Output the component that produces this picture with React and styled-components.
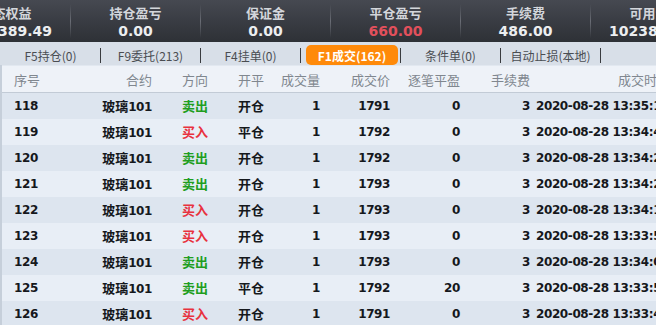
import React from 'react';
import styled, { createGlobalStyle } from 'styled-components';

const GlobalStyle = createGlobalStyle`
  html, body {
    margin: 0;
    padding: 0;
    width: 656px;
    height: 325px;
    overflow: hidden;
    background: #e6ecf4;
  }
`;

const CN = `"Noto Sans CJK SC", "Noto Sans", sans-serif`;
const NUM = `"DejaVu Sans", "Noto Sans CJK SC", sans-serif`;

const Page = styled.div`
  width: 656px;
  height: 325px;
  overflow: hidden;
  display: flex;
  flex-direction: column;
`;

const StatBar = styled.div`
  height: 42px;
  flex: none;
  background: linear-gradient(180deg, #464951 0%, #383b42 55%, #2e3136 100%);
  display: flex;
  align-items: stretch;
  margin-left: -59px;
`;

const Stat = styled.div`
  width: 129px;
  flex: none;
  display: flex;
  flex-direction: column;
  align-items: center;
  padding-top: 4px;
  white-space: nowrap;
`;

const StatLabel = styled.div`
  font-family: ${CN};
  font-weight: 700;
  font-size: 13px;
  line-height: 17px;
  color: #d3d6db;
`;

const StatValue = styled.div`
  font-family: ${NUM};
  font-weight: 700;
  font-size: 14px;
  line-height: 20px;
  color: ${p => (p.$red ? '#e2505c' : '#eceef0')};
`;

const StatSep = styled.div`
  width: 1px;
  flex: none;
  align-self: center;
  height: 34px;
  background: linear-gradient(180deg, rgba(120,124,132,0) 0%, #6a6d75 50%, rgba(120,124,132,0) 100%);
`;

const TabBar = styled.div`
  height: 23px;
  flex: none;
  background: #d8dfe8;
  display: flex;
  align-items: flex-end;
  padding-left: 1px;
`;

const Tab = styled.div`
  flex: none;
  height: 20px;
  display: flex;
  align-items: center;
  justify-content: center;
  font-family: ${CN};
  font-size: 12px;
  white-space: nowrap;
  color: ${p => (p.$active ? '#fff' : '#4a4d52')};
  font-weight: ${p => (p.$active ? 700 : 400)};
  background: ${p => (p.$active ? '#ff8a0a' : 'transparent')};
  border-radius: 5px;
  margin: ${p => (p.$active ? '0 2px 0 5px' : '0')};
  width: ${p => (p.$active ? '92px' : '99px')};
`;

const TabSep = styled.div`
  width: 1px;
  height: 15px;
  flex: none;
  align-self: center;
  margin-top: 3px;
  background: #3a3c40;
`;

const Table = styled.div`
  flex: 1;
  border-left: 2px solid #c6cfda;
  background: #e6ecf4;
`;

const cols = '88px 68px 74px 38px 56px 70px 70px 70px 150px';

const HeadRow = styled.div`
  display: grid;
  grid-template-columns: ${cols};
  height: 26px;
  align-items: center;
  background: #eef2f8;
  border-bottom: 1px solid #c2cbd6;
  border-top: 1px solid #e2e8f0;
`;

const HeadCell = styled.div`
  font-family: ${CN};
  font-size: 13px;
  color: #80878f;
  white-space: nowrap;
  text-align: ${p => p.$align || 'right'};
  padding: ${p => (p.$align === 'left' ? '0 0 0 12px' : p.$align === 'center' ? '0' : '0 6px 0 0')};
`;

const Row = styled.div`
  display: grid;
  grid-template-columns: ${cols};
  height: 26px;
  align-items: center;
  background: ${p => (p.$odd ? '#e8eef6' : '#dde5ef')};
`;

const Cell = styled.div`
  font-family: ${NUM};
  font-weight: 700;
  font-size: 12px;
  letter-spacing: -0.4px;
  line-height: 18px;
  color: #15181c;
  white-space: nowrap;
  text-align: ${p => p.$align || 'right'};
  padding: ${p => (p.$align === 'left' ? '0 0 0 12px' : p.$align === 'center' ? '0' : '0 6px 0 0')};
`;

const TimeCell = styled(Cell)`
  text-align: left;
  padding: 0;
`;

const Cn = styled.span`
  font-family: ${CN};
  font-size: 13px;
  font-weight: 700;
  letter-spacing: 0;
  color: ${p => (p.$side === 'sell' ? '#1f9e1f' : p.$side === 'buy' ? '#e8323e' : 'inherit')};
`;

const stats = [
  { label: '动态权益', value: '1024389.49' },
  { label: '持仓盈亏', value: '0.00' },
  { label: '保证金', value: '0.00' },
  { label: '平仓盈亏', value: '660.00', red: true },
  { label: '手续费', value: '486.00' },
  { label: '可用资金', value: '1023889.49' },
];

const tabs = ['F5持仓(0)', 'F9委托(213)', 'F4挂单(0)', 'F1成交(162)', '条件单(0)', '自动止损(本地)'];

const rows = [
  [118, 'sell', '开仓', 1, 1791, 0, '13:35:12'],
  [119, 'buy', '平仓', 1, 1792, 0, '13:34:48'],
  [120, 'sell', '开仓', 1, 1792, 0, '13:34:26'],
  [121, 'sell', '开仓', 1, 1793, 0, '13:34:21'],
  [122, 'buy', '开仓', 1, 1793, 0, '13:34:15'],
  [123, 'buy', '开仓', 1, 1793, 0, '13:33:58'],
  [124, 'sell', '开仓', 1, 1793, 0, '13:34:02'],
  [125, 'sell', '平仓', 1, 1792, 20, '13:33:55'],
  [126, 'buy', '开仓', 1, 1791, 0, '13:33:47'],
];

export default function App() {
  return (
    <Page>
      <GlobalStyle />
      <StatBar>
        {stats.map((s, i) => (
          <React.Fragment key={s.label}>
            {i > 0 && <StatSep />}
            <Stat>
              <StatLabel>{s.label}</StatLabel>
              <StatValue $red={s.red}>{s.value}</StatValue>
            </Stat>
          </React.Fragment>
        ))}
      </StatBar>

      <TabBar>
        {tabs.map((t, i) => (
          <React.Fragment key={t}>
            <Tab $active={i === 3}>{t}</Tab>
            <TabSep />
          </React.Fragment>
        ))}
      </TabBar>

      <Table>
        <HeadRow>
          <HeadCell $align="left">序号</HeadCell>
          <HeadCell>合约</HeadCell>
          <HeadCell $align="center">方向</HeadCell>
          <HeadCell $align="center">开平</HeadCell>
          <HeadCell>成交量</HeadCell>
          <HeadCell>成交价</HeadCell>
          <HeadCell>逐笔平盈</HeadCell>
          <HeadCell>手续费</HeadCell>
          <HeadCell style={{ paddingRight: 16 }}>成交时间</HeadCell>
        </HeadRow>
        {rows.map((r, i) => (
          <Row key={r[0]} $odd={i % 2 === 1}>
            <Cell $align="left">{r[0]}</Cell>
            <Cell><Cn>玻璃</Cn>101</Cell>
            <Cell $align="center"><Cn $side={r[1]}>{r[1] === 'sell' ? '卖出' : '买入'}</Cn></Cell>
            <Cell $align="center"><Cn>{r[2]}</Cn></Cell>
            <Cell>{r[3]}</Cell>
            <Cell>{r[4]}</Cell>
            <Cell>{r[5]}</Cell>
            <Cell>3</Cell>
            <TimeCell>2020-08-28 {r[6]}</TimeCell>
          </Row>
        ))}
      </Table>
    </Page>
  );
}
